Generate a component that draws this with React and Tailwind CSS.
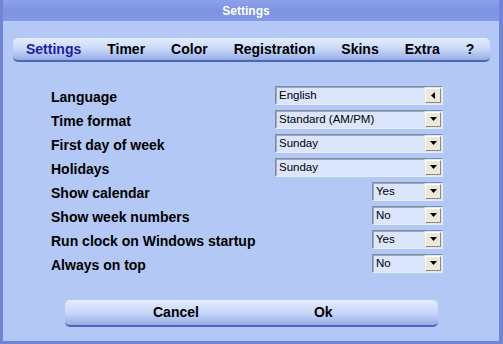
import React from "react";

const Down = () => (
  <svg width="7" height="4" viewBox="0 0 7 4"><path d="M0 0h7L3.5 4z" fill="#000" /></svg>
);
const Left = () => (
  <svg width="4" height="7" viewBox="0 0 4 7"><path d="M4 0v7L0 3.5z" fill="#000" /></svg>
);

function Combo({ value, wide, left }) {
  return (
    <div
      className={`${wide ? "w-[168px]" : "w-[71px]"} h-[19px] flex items-center border border-t-[#7f8aa3] border-l-[#7f8aa3] border-b-[#e6ecf8] border-r-[#e6ecf8] bg-[#dbe5fb]`}
    >
      <div className="flex-1 h-full flex items-center border border-t-[#a0a8bc] border-l-[#a0a8bc] border-b-[#dbe5fb] border-r-[#dbe5fb] pl-[2px] pt-[2px] text-[11.5px] text-black leading-none">
        {value}
      </div>
      <div className="w-[16px] h-[15px] mr-[1px] flex items-center justify-center bg-[#ece9d8] border border-t-white border-l-white border-b-[#8c8a80] border-r-[#8c8a80]">
        {left ? <Left /> : <Down />}
      </div>
    </div>
  );
}

const rows = [
  ["Language", "English", true, true],
  ["Time format", "Standard (AM/PM)", true],
  ["First day of week", "Sunday", true],
  ["Holidays", "Sunday", true],
  ["Show calendar", "Yes", false],
  ["Show week numbers", "No", false],
  ["Run clock on Windows startup", "Yes", false],
  ["Always on top", "No", false],
];

const tabs = ["Settings", "Timer", "Color", "Registration", "Skins", "Extra", "?"];

export default function App() {
  return (
    <div
      className="w-[503px] h-[344px] flex flex-col bg-[#b3c8f4] border-l-[3px] border-r-[4px] border-b-[3px] border-[#7083d9] overflow-hidden"
      style={{ fontFamily: '"Liberation Sans", Arial, sans-serif' }}
    >
      <div className="h-[21px] shrink-0 flex items-center justify-center pr-[10px] bg-gradient-to-b from-[#8ea2ea] via-[#7c93e2] to-[#8499e6] text-white text-[12px] font-bold">
        Settings
      </div>

      <div className="ml-[10px] mt-[17px] w-[477px] h-[24px] shrink-0 flex items-center gap-[26px] pl-[13px] rounded-[5px] bg-gradient-to-b from-[#e4edfe] via-[#c8d8f8] to-[#97aee6] border-b-[2px] border-[#4e66b8] text-[14px] font-bold text-black">
        {tabs.map((t, i) => (
          <span key={t} className={i === 0 ? "text-[#1b20a8]" : ""}>
            {t}
          </span>
        ))}
      </div>

      <div className="mt-[21px] ml-[48px] flex flex-col">
        {rows.map(([label, value, wide, left]) => (
          <div key={label} className="h-[24px] flex items-center">
            <div className="w-[224px] pt-[4px] text-[14px] font-bold text-black leading-none">{label}</div>
            <div className="w-[168px] flex justify-end">
              <Combo value={value} wide={wide} left={left} />
            </div>
          </div>
        ))}
      </div>

      <div className="ml-[62px] mt-[25px] w-[373px] h-[27px] shrink-0 flex items-center pl-[88px] gap-[115px] rounded-[5px] bg-gradient-to-b from-[#e4edfe] via-[#c8d8f8] to-[#97aee6] border-b-[2px] border-[#4e66b8] text-[14px] font-bold text-black">
        <span>Cancel</span>
        <span>Ok</span>
      </div>
    </div>
  );
}
